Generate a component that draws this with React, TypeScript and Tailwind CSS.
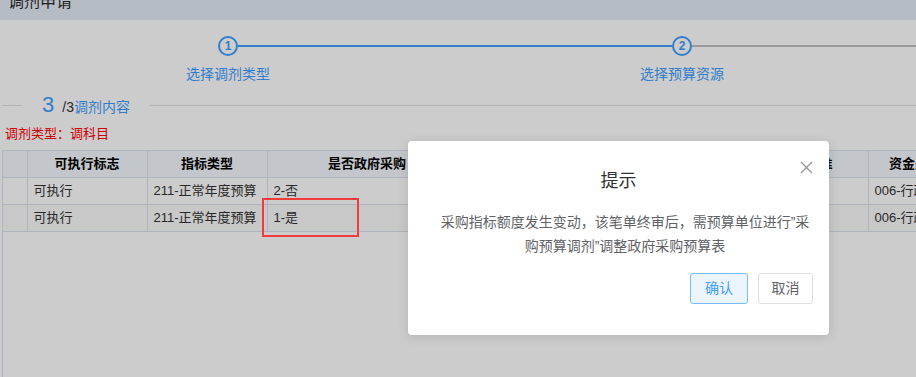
const columns = [
  { title: "", width: 24 },
  { title: "可执行标志", width: 120 },
  { title: "指标类型", width: 120 },
  { title: "是否政府采购", width: 200 },
  { title: "采购方式", width: 200 },
  { title: "集中采购目录限额标准", width: 201 },
  { title: "资金来源类型", width: 120 },
]

const rows = [
  ["", "可执行", "211-正常年度预算", "2-否", "", "", "006-行政事业单位"],
  ["", "可执行", "211-正常年度预算", "1-是", "", "", "006-行政事业单位"],
]

const steps = [
  { no: 1, label: "选择调剂类型", left: "", right: "bg-[#409eff]" },
  { no: 2, label: "选择预算资源", left: "bg-[#409eff]", right: "bg-[#c0c0c0]" },
  { no: 3, label: "调剂内容", left: "bg-[#c0c0c0]", right: "" },
]

export default function App() {
  return (
    <div className="relative h-[377px] w-[916px] overflow-hidden bg-white font-['Liberation_Sans','Noto_Sans_CJK_SC',sans-serif]">
      {/* page header */}
      <div className="h-5 overflow-hidden bg-[#e4ebf5] pl-2">
        <div className="-mt-[8px] text-[16px] leading-[20px] text-[#2a2a2a]">调剂申请</div>
      </div>

      {/* steps */}
      <div className="flex pl-px pt-4">
        {steps.map((s) => (
          <div key={s.no} className="flex w-[454px] shrink-0 flex-col items-center">
            <div className="flex w-full items-center">
              <div className={`h-[2px] flex-1 ${s.left}`} />
              <div className="flex h-5 w-5 items-center justify-center rounded-full border-2 border-[#409eff] text-[12px] font-bold leading-none text-[#409eff]">
                {s.no}
              </div>
              <div className={`h-[2px] flex-1 ${s.right}`} />
            </div>
            <div className="mt-2 text-[14px] leading-[20px] text-[#409eff]">{s.label}</div>
          </div>
        ))}
      </div>

      {/* section title */}
      <div className="mt-[9px] flex h-6 items-center">
        <div className="ml-[2px] h-px w-5 bg-[#e0e0e0]" />
        <div className="flex items-baseline px-5">
          <span className="text-[22px] leading-6 text-[#409eff]">3</span>
          <span className="ml-2 text-[14px] text-[#333]">/3</span>
          <span className="text-[14px] text-[#409eff]">调剂内容</span>
        </div>
        <div className="h-px flex-1 bg-[#e0e0e0]" />
      </div>

      <div className="mt-[7px] pl-[5px] text-[13px] leading-5 text-[#ff0000]">调剂类型：调科目</div>

      {/* table */}
      <div className="ml-[2px] mt-[6px] h-[300px] w-[1100px] border-l border-t border-[#dde1ee]">
        <table className="border-collapse text-[13px] text-[#333]">
          <thead>
            <tr className="h-[26px] bg-[#f4f8fd]">
              {columns.map((c, i) => (
                <th
                  key={i}
                  style={{ width: c.width, minWidth: c.width }}
                  className="border-b border-r border-[#dde1ee] px-[6px] text-center font-bold text-black"
                >
                  {c.title}
                </th>
              ))}
            </tr>
          </thead>
          <tbody>
            {rows.map((r, ri) => (
              <tr key={ri} className={`h-[27px] ${ri === 1 ? "bg-[#fafafa]" : "bg-white"}`}>
                {r.map((v, ci) => (
                  <td key={ci} className="whitespace-nowrap border-b border-r border-[#dde1ee] px-[6px] text-left">
                    {v}
                  </td>
                ))}
              </tr>
            ))}
          </tbody>
        </table>
      </div>

      {/* modal mask */}
      <div className="absolute inset-0 bg-black/20" />

      {/* annotation */}
      <div className="absolute left-[262px] top-[198px] h-[39px] w-[97px] border-2 border-[#f23c3c]" />

      {/* dialog */}
      <div className="absolute left-[408px] top-[141px] w-[421px] rounded-[4px] bg-white pb-[31px] pt-[28px] shadow-[0_2px_12px_rgba(0,0,0,0.12)]">
        <button className="absolute right-[16px] top-[20px] text-[#909399]">
          <svg width="13" height="13" viewBox="0 0 13 13" fill="none" stroke="currentColor" strokeWidth="1.2">
            <path d="M1 1L12 12M12 1L1 12" />
          </svg>
        </button>
        <div className="text-center text-[18px] leading-6 text-[#303133]">提示</div>
        <div className="mt-[17px] pl-[29px] pr-[16px]">
          <p className="text-center text-[14px] leading-6 text-[#606266]">
            采购指标额度发生变动，该笔单终审后，需预算单位进行”采购预算调剂”调整政府采购预算表
          </p>
        </div>
        <div className="mt-[15px] flex justify-end gap-[10px] pr-4">
          <button className="h-[31px] w-[58px] rounded-[3px] border border-[#79bbff] bg-[#ecf5ff] text-[14px] text-[#409eff]">
            确认
          </button>
          <button className="h-[31px] w-[55px] rounded-[3px] border border-[#dcdfe6] bg-white text-[14px] text-[#606266]">
            取消
          </button>
        </div>
      </div>
    </div>
  )
}
